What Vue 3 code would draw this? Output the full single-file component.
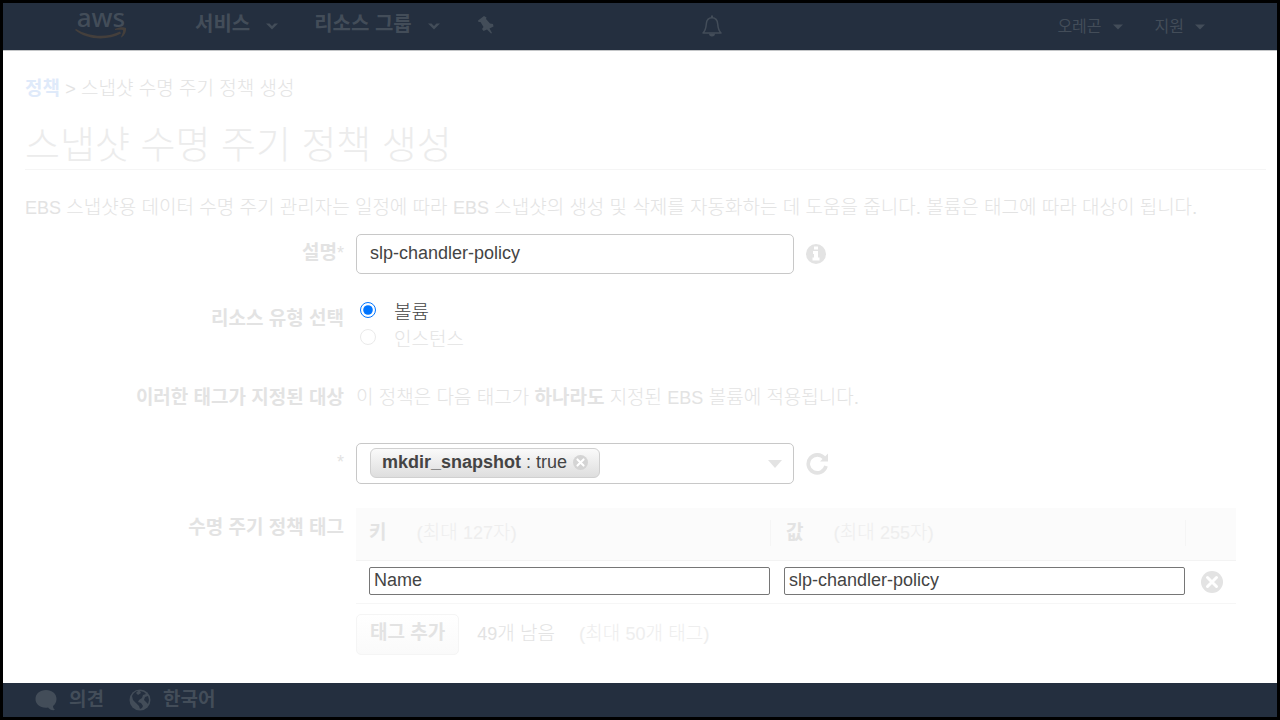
<script setup>
import { ref } from 'vue'

const description = ref('slp-chandler-policy')
const resourceType = ref('volume')
const targetTags = ref([{ key: 'mkdir_snapshot', value: 'true' }])
const policyTags = ref([{ key: 'Name', value: 'slp-chandler-policy' }])
const maxTags = 50

function removeTarget(i) {
  targetTags.value.splice(i, 1)
}
function addTag() {
  policyTags.value.push({ key: '', value: '' })
}
function removeTag(i) {
  policyTags.value.splice(i, 1)
}
</script>

<template>
  <div class="page">
    <header class="topbar">
      <a href="#" class="logo" aria-label="aws">
        <span class="logo-text">aws</span>
        <svg class="smile" viewBox="0 0 52 13" width="52" height="13" aria-hidden="true">
          <path d="M1 2C14 10 32 11 45 4.500L46 6.500C32 14 12 13 0 3Z" />
          <path d="M40 2C44 0 49 0 51 1C51.500 4 50 8 46.500 10.500L46 10C47.500 7 48.500 4 48 3C46 2.500 43 2.500 40 3Z" />
        </svg>
      </a>
      <nav class="main-nav">
        <button type="button" class="menu">서비스
          <svg width="12" height="7" viewBox="0 0 12 7"><path d="M0 .5H3.500L6 3L8.500 .5H12L6 6.500Z" /></svg>
        </button>
        <button type="button" class="menu">리소스 그룹
          <svg width="12" height="7" viewBox="0 0 12 7"><path d="M0 .5H3.500L6 3L8.500 .5H12L6 6.500Z" /></svg>
        </button>
        <button type="button" class="pin" aria-label="고정">
          <svg width="16" height="18" viewBox="0 0 16 18">
            <path d="M6 0L8.500 1.500L8 3L12 7.500L15 8L15.500 10.500L11.500 12.500L14 17L13 17.500L9 13.500L5.500 15L4 13L5.500 11L2.500 6L0.500 6L0 4.500Z" />
          </svg>
        </button>
      </nav>
      <button type="button" class="bell" aria-label="알림">
        <svg width="20" height="22" viewBox="0 0 20 22">
          <path d="M1 18C3.500 15.500 4 13 4.300 9C4.600 5 6.500 2.800 10 2.800C13.500 2.800 15.400 5 15.700 9C16 13 16.500 15.500 19 18Z" fill="none" stroke="currentColor" stroke-width="1.500" stroke-linejoin="round" />
          <path d="M9 .5H11V3H9ZM7 18.500H13C13 20.500 12 21.500 10 21.500S7 20.500 7 18.500Z" />
        </svg>
      </button>
      <nav class="side-nav">
        <button type="button" class="menu small">오레곤
          <svg width="10" height="6" viewBox="0 0 10 6"><path d="M0 .5H10L5 5.500Z" /></svg>
        </button>
        <button type="button" class="menu small">지원
          <svg width="10" height="6" viewBox="0 0 10 6"><path d="M0 .5H10L5 5.500Z" /></svg>
        </button>
      </nav>
    </header>

    <main class="content">
      <nav class="crumbs"><a href="#">정책</a> <span class="latin">&gt;</span> <span>스냅샷 수명 주기 정책 생성</span></nav>
      <h1>스냅샷 수명 주기 정책 생성</h1>
      <p class="intro"><span class="latin">EBS</span> 스냅샷용 데이터 수명 주기 관리자는 일정에 따라 <span class="latin">EBS</span> 스냅샷의 생성 및 삭제를 자동화하는 데 도움을 줍니다. 볼륨은 태그에 따라 대상이 됩니다.</p>

      <form class="form" @submit.prevent>
        <label class="name" for="description">설명<span class="star">*</span></label>
        <div class="field line">
          <input id="description" v-model="description" class="box text-box" type="text">
          <button type="button" class="icon" aria-label="정보">
            <svg width="20" height="20" viewBox="0 0 20 20">
              <circle cx="10" cy="10" r="10" />
              <path class="cut" d="M8 2.500H12V5.500H8ZM7 7H12V13.500H13.500V16.500H6.500V13.500H8V10H7Z" />
            </svg>
          </button>
        </div>

        <span id="resource-label" class="name resource">리소스 유형 선택</span>
        <div class="field radios" role="radiogroup" aria-labelledby="resource-label">
          <label><input v-model="resourceType" type="radio" name="resource" value="volume">볼륨</label>
          <label class="off"><input v-model="resourceType" type="radio" name="resource" value="instance">인스턴스</label>
        </div>

        <span class="name targets">이러한 태그가 지정된 대상</span>
        <p class="field hint">이 정책은 다음 태그가 <strong>하나라도</strong> 지정된 <span class="latin">EBS</span> 볼륨에 적용됩니다.</p>

        <span class="name"><span class="star">*</span></span>
        <div class="field line">
          <div class="box tag-box">
            <span v-for="(tag, i) in targetTags" :key="tag.key" class="chip">
              <span><b>{{ tag.key }}</b> : {{ tag.value }}</span>
              <button type="button" aria-label="제거" @click="removeTarget(i)">
                <svg width="15" height="15" viewBox="0 0 22 22">
                  <circle cx="11" cy="11" r="11" />
                  <path class="cross" d="M6.500 6.500L15.500 15.500M15.500 6.500L6.500 15.500" />
                </svg>
              </button>
            </span>
            <button type="button" class="open" aria-label="태그 선택">
              <svg width="14" height="8" viewBox="0 0 14 8"><path d="M0 0H14L7 8Z" /></svg>
            </button>
          </div>
          <button type="button" class="icon" aria-label="새로 고침">
            <svg width="23" height="22" viewBox="0 0 23 22">
              <path d="M18.500 5.500A9 9 0 1 0 20 13" fill="none" stroke="currentColor" stroke-width="3.600" />
              <path d="M22 .5V8.500H14Z" />
            </svg>
          </button>
        </div>

        <span class="name tags">수명 주기 정책 태그</span>
        <div class="field tags-field">
          <table>
            <thead>
              <tr>
                <th class="key"><div>키<small>(최대 <span class="latin">127</span>자)</small></div></th>
                <th class="value"><div>값<small>(최대 <span class="latin">255</span>자)</small></div></th>
                <th class="remove"></th>
              </tr>
            </thead>
            <tbody>
              <tr v-for="(tag, i) in policyTags" :key="i">
                <td><input v-model="tag.key" type="text" aria-label="키"></td>
                <td><input v-model="tag.value" type="text" aria-label="값"></td>
                <td class="remove">
                  <button type="button" class="icon" aria-label="태그 제거" @click="removeTag(i)">
                    <svg width="22" height="22" viewBox="0 0 22 22">
                      <circle cx="11" cy="11" r="11" />
                      <path class="cross" d="M6.500 6.500L15.500 15.500M15.500 6.500L6.500 15.500" />
                    </svg>
                  </button>
                </td>
              </tr>
            </tbody>
          </table>
          <div class="actions">
            <button type="button" class="add" @click="addTag">태그 추가</button>
            <span><span class="latin">{{ maxTags - policyTags.length }}</span>개 남음</span>
            <span class="limit">(최대 <span class="latin">{{ maxTags }}</span>개 태그)</span>
          </div>
        </div>
      </form>
    </main>

    <footer class="bottom">
      <a href="#">
        <svg width="22" height="22" viewBox="0 0 22 22">
          <path d="M11 1C17 1 21.500 4.500 21.500 10C21.500 13 20 15.500 18 17C18 19 19 20 20 21C17 21.500 14.500 20.500 13 18.500C6 19.500 .5 16 .5 10C.5 4.500 5 1 11 1Z" />
        </svg>의견
      </a>
      <a href="#">
        <svg width="22" height="22" viewBox="0 0 22 22">
          <circle cx="11" cy="11" r="10.500" />
          <path class="sea" d="M3 7C4 4 7 2 9 2L7 4L9 6L12 4L11 2L15 3L17 5L14 6L13 9L10 11L9 13L12 14L14 17L13 19L11 20L10 17L7 14L4 11Z" />
          <path class="sea" d="M16 8L19 7L20 11L19 15L17 13L15 11Z" />
        </svg>한국어
      </a>
    </footer>
  </div>
</template>

<style>
body {
  background: #000;
}
</style>

<style scoped>
* {
  box-sizing: border-box;
}
.page {
  min-height: 100vh;
  display: flex;
  flex-direction: column;
  border: 3px solid #000;
  background: #fff;
  color: #e3e3e3;
  font: 300 19px/26px "Liberation Sans", "Noto Sans CJK KR", sans-serif;
}
b,
strong {
  font-weight: 700;
}
button {
  padding: 0;
  border: 0;
  background: none;
  color: inherit;
  font: inherit;
}
svg {
  display: block;
  fill: currentColor;
  flex: none;
}
a {
  color: inherit;
  text-decoration: none;
}
.latin {
  font-size: 18px;
}
.topbar {
  display: flex;
  height: 48px;
  padding: 0 72px;
  background: #242f3f;
  border-bottom: 1px solid #c4c6c8;
  color: #434d59;
}
.logo {
  width: 52px;
}
.logo-text {
  display: block;
  text-align: center;
  font: 500 26px/28px "Noto Sans", sans-serif;
}
.smile {
  margin-top: -4px;
  color: #443f3c;
}
.main-nav {
  display: flex;
  flex: 1;
  margin-left: 68px;
}
.menu {
  display: flex;
  align-items: center;
  height: 42px;
  margin-right: 36px;
  font-size: 20px;
  font-weight: 700;
  gap: 16px;
}
.menu svg {
  margin-top: 5px;
}
.pin {
  height: 18px;
  margin: 13px 0 0 2px;
}
.bell {
  height: 22px;
  margin: 12px 0 0 24px;
}
.side-nav {
  display: flex;
  flex: 1;
  justify-content: flex-end;
  gap: 32px;
}
.menu.small {
  height: 48px;
  margin: 0;
  font-size: 16px;
  font-weight: 400;
  gap: 11px;
}
.menu.small svg {
  margin-top: 0;
}
.content {
  flex: 1;
  padding: 25px 11px 28px 22px;
}
.crumbs a {
  color: #dfeafa;
  font-weight: 700;
}
h1 {
  margin: 20px 0 0;
  padding-bottom: 1px;
  border-bottom: 1px solid #f5f5f5;
  color: #ececec;
  font-size: 38px;
  font-weight: 300;
  line-height: 46px;
}
.intro {
  margin: 25px 0 13px;
}
.form {
  display: grid;
  grid-template-columns: 319px minmax(0, 1fr);
  column-gap: 12px;
}
.name {
  padding-top: 6px;
  text-align: right;
  font-weight: 700;
}
.star {
  font-size: 18px;
  font-weight: 400;
}
.line {
  display: flex;
  align-items: center;
  gap: 12px;
}
.box {
  width: 438px;
  border: 1px solid #c8c8c8;
  border-radius: 5px;
  background: #fff;
}
.text-box {
  height: 40px;
  padding: 0 13px 2px;
  color: #444;
  font: 400 18px/24px "Liberation Sans", sans-serif;
}
.icon,
.open {
  color: #e3e3e3;
}
.icon {
  display: block;
}
.cut {
  fill: #fff;
}
.cross {
  fill: none;
  stroke: #fff;
  stroke-width: 3;
  stroke-linecap: round;
}
.resource {
  padding-top: 32px;
}
.radios {
  padding: 24px 0 0 4px;
}
.radios label {
  display: flex;
  height: 27px;
  color: #444;
  line-height: 30px;
}
.radios input {
  width: 16px;
  height: 16px;
  margin: 4px 18px 0 0;
}
.radios .off {
  color: #e3e3e3;
}
.radios .off input {
  opacity: 0.15;
}
.targets {
  padding-top: 33px;
}
.hint {
  margin: 33px 0 32px;
}
.tag-box {
  display: flex;
  justify-content: space-between;
  align-items: center;
  height: 41px;
  padding: 0 11px 0 13px;
}
.chip {
  display: flex;
  align-items: center;
  gap: 6px;
  height: 30px;
  margin-bottom: 2px;
  padding: 0 11px;
  border: 1px solid #d0d0d0;
  border-radius: 6px;
  background: linear-gradient(#fafafa, #dedede);
  color: #444;
  font-size: 18px;
}
.chip > span {
  padding-bottom: 2px;
}
.chip button {
  color: #d4d4d4;
}
.tags {
  padding-top: 31px;
}
.tags-field {
  padding-top: 24px;
}
table {
  width: 880px;
  border-collapse: collapse;
  table-layout: fixed;
}
thead {
  background: #fbfbfb;
}
th {
  height: 52px;
  padding: 0 0 2px;
  border-bottom: 1px solid #f3f3f3;
  text-align: left;
}
th div {
  padding-left: 13px;
  border-right: 1px solid #f5f5f5;
}
.key,
.value {
  width: 415px;
}
.value div {
  padding-left: 15px;
}
small {
  margin-left: 30px;
  color: #eee;
  font-size: 19px;
  font-weight: 300;
}
td {
  height: 43px;
  padding: 6px 1px 0 13px;
  border-bottom: 1px solid #f6f6f6;
  vertical-align: top;
}
td input {
  display: block;
  width: 100%;
  height: 28px;
  padding: 0 4px 1px;
  border: 1px solid #767676;
  border-radius: 2px;
  color: #444;
  font: 400 18px/24px "Liberation Sans", sans-serif;
}
td.remove {
  padding: 10px 0 0 15px;
}
.actions {
  display: flex;
  align-items: center;
  margin-top: 10px;
}
.add {
  height: 41px;
  margin-right: 18px;
  padding: 0 13px 2px;
  border: 1px solid #f5f5f5;
  border-radius: 5px;
  background: linear-gradient(#fff, #fafafa);
  font-weight: 700;
}
.limit {
  margin-left: 24px;
  color: #eee;
}
.bottom {
  display: flex;
  gap: 25px;
  height: 34px;
  padding: 0 32px;
  background: #242f3f;
  color: #434d59;
  font-weight: 700;
}
.bottom a {
  display: flex;
  align-items: center;
  gap: 12px;
}
.sea {
  fill: #242f3f;
}
</style>
